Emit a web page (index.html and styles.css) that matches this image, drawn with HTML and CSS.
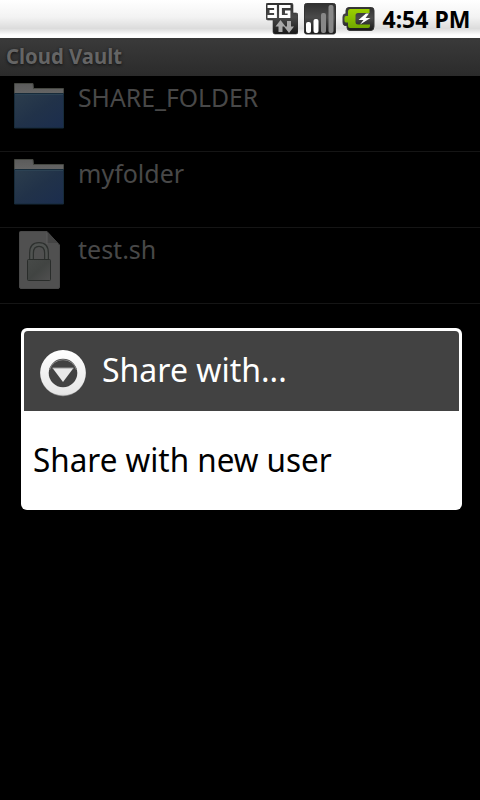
FILE: index.html
```html
<!DOCTYPE html>
<html lang="en">
<head>
<meta charset="utf-8">
<title>Cloud Vault</title>
<link rel="stylesheet" href="styles.css">
</head>
<body>
<svg class="defs" width="0" height="0">
  <defs>
    <linearGradient id="dark" x2="0" y2="1"><stop stop-color="#303030"/><stop offset=".45" stop-color="#4a4a4a"/><stop offset="1" stop-color="#181818"/></linearGradient>
    <linearGradient id="green" x2="0" y2="1"><stop stop-color="#9bd000"/><stop offset="1" stop-color="#70a800"/></linearGradient>
    <linearGradient id="blue" x2="1" y2="1"><stop stop-color="#2c3d4c"/><stop offset=".5" stop-color="#213249"/><stop offset="1" stop-color="#1b2d4e"/></linearGradient>
    <linearGradient id="tab" x2="0" y2="1"><stop stop-color="#5b5b5b"/><stop offset="1" stop-color="#656565"/></linearGradient>
    <linearGradient id="lock" x2="1" y2="1"><stop stop-color="#474a48"/><stop offset=".5" stop-color="#414442"/><stop offset="1" stop-color="#505050"/></linearGradient>
    <linearGradient id="ring" x2="0" y2="1"><stop stop-color="#fff"/><stop offset=".95" stop-color="#e6e6e6"/><stop offset="1" stop-color="#d5d5d5"/></linearGradient>
    <symbol id="folder" viewBox="0 0 50 46">
      <path d="M.5 11V.5h18.500l.5 5h30V11z" fill="url(#tab)" stroke="#454741"/>
      <path d="M.5 10.500h49v34.500H.5z" fill="url(#blue)" stroke="#172b3a"/>
      <path d="M1 11.500h48" stroke="#2c4254"/>
    </symbol>
  </defs>
</svg>
<div class="screen">
  <header class="status">
    <svg class="net" width="32" height="32" viewBox="0 0 32 32">
      <path d="M2 0h23q2 0 2 2v8h3q2 0 2 2v17q0 2-2 2H9q-2 0-2-2V17H2q-2 0-2-2V2q0-2 2-2z" fill="url(#dark)" stroke="#333" stroke-width=".6"/>
      <path d="M1.500 3.500h8v10h-8M3.500 8.500h6M24.500 3.500H14.500v10h8.500V9h-4" fill="none" stroke="#fff" stroke-width="2.800"/>
      <path d="M14.500 17l5 6.500h-3v5.500h-4v-5.500h-3zM23 30l-5-6.500h3V18h4v5.500h3z" fill="#aaa"/>
    </svg>
    <svg class="signal" width="32" height="32" viewBox="0 0 32 32">
      <rect x=".5" y=".5" width="31" height="30.500" rx="2" fill="url(#dark)" stroke="#333"/>
      <rect x="2" y="19" width="5" height="11" rx="2" fill="#fff"/>
      <rect x="9.500" y="16" width="5" height="14" rx="2" fill="#fff"/>
      <rect x="17" y="10" width="5" height="20" rx="2" fill="#888"/>
      <rect x="24.500" y="2" width="5" height="28" rx="2" fill="#888"/>
    </svg>
    <svg class="battery" width="33" height="24" viewBox="0 0 33 24">
      <path d="M7 .5h22.500q2.500 0 2.500 3v16q0 4-3 4H8q-3 0-3-3v-2H3q-2 0-2-3V10q0-3 2-3h1V3.500q0-3 3-3z" fill="url(#dark)" stroke="#383838"/>
      <path d="M8 2h19.500v4H16q-2.500 0-2.500 2.500v6.500q0 2.500 2.500 2.500h12v1.500q0 2-2 2H8q-2 0-2-2v-3.500H4q-1.500 0-1.500-2V11q0-2 1.500-2h2V4.500Q6 2 8 2z" fill="url(#green)"/>
      <path d="M24 6.500l-7.500 6.500h5L18 17.500l10.500-6.500h-5L27 6.500z" fill="#fff"/>
    </svg>
    <span class="clock"><span class="fit">4:54 PM</span></span>
  </header>
  <div class="titlebar"><span class="fit">Cloud Vault</span></div>
  <ul class="files">
    <li><svg class="folder"><use href="#folder"/></svg><span class="name"><span class="fit">SHARE_FOLDER</span></span></li>
    <li><svg class="folder"><use href="#folder"/></svg><span class="name"><span class="fit">myfolder</span></span></li>
    <li><svg class="file" viewBox="0 0 42 58">
      <path d="M1.500.5H28L40.500 14v42q0 1.500-1.500 1.500H2Q.5 57.500.5 56V1.500Q.5.500 1.500.5z" fill="#505050" stroke="#484848"/>
      <path d="M28 .5V13q0 1 1 1h11.500z" fill="#444"/><path d="M28 2v11h11" fill="none" stroke="#5c5c5c"/>
      <path d="M12.500 30v-8q0-8.500 7.500-8.500t7.500 8.500v8" fill="none" stroke="#2d302e" stroke-width="5"/>
      <path d="M12.500 30v-8q0-8.500 7.500-8.500t7.500 8.500v8" fill="none" stroke="#505351" stroke-width="2.500"/>
      <rect x="8.500" y="28.500" width="23" height="21" rx="1" fill="url(#lock)" stroke="#292c2a"/>
    </svg><span class="name"><span class="fit">test.sh</span></span></li>
  </ul>
  <section class="dialog">
    <div class="heading">
      <svg width="46" height="47" viewBox="0 0 46 47">
        <circle cx="23" cy="23.500" r="22.800" fill="#888"/>
        <circle cx="23" cy="22.800" r="22.800" fill="url(#ring)"/>
        <circle cx="23" cy="23" r="14.300" fill="#424242"/>
        <path d="M9.500 20a14 14 0 0 1 27 0" fill="none" stroke="#888" stroke-width="1"/>
        <path d="M12.500 18h21L23 32z" fill="#e9e9e9"/><path d="M12.500 18h21" stroke="#999"/>
      </svg>
      <span class="heading-text"><span class="fit">Share with...</span></span>
    </div>
    <div class="option"><span class="fit">Share with new user</span></div>
  </section>
</div>
</body>
</html>
```
FILE: styles.css
```css
* { box-sizing: border-box; }
body { margin: 0; background: #000; font-family: "Noto Sans", "Open Sans", sans-serif; }
.defs { position: absolute; }
.screen { position: relative; width: 480px; height: 800px; overflow: hidden; background: #000; }
.fit { display: inline-block; white-space: nowrap; transform-origin: 0 50%; }
.status { display: flex; height: 38px; padding: 3px 0 0 266px; background: linear-gradient(#fff 0%, #f3f3f3 45%, #dcdcdc 75%, #fff 92%); }
.signal { margin-left: 6px; }
.battery { margin: 4px 0 0 5.5px; }
.clock { margin-left: 8px; font-size: 23px; font-weight: 700; line-height: 32px; color: #000; }
.titlebar { height: 38px; padding-left: 6px; background: linear-gradient(#3a3a3a, #2b2b2b); font-size: 21px; font-weight: 700; line-height: 36px; color: #656565; text-shadow: 0 1px 3px #111; }
.titlebar .fit { transform: scaleX(.966); }
.files { margin: 0; padding: 0; list-style: none; }
.files li { display: flex; height: 76px; border-bottom: 1px solid #151515; }
.folder { width: 50px; height: 46px; margin: 7px 14px 0; }
.file { width: 42px; height: 58px; margin: 3px 17px 0 19px; }
.name { font-size: 25px; line-height: 42px; color: #484848; }
.files li:first-child .fit { transform: scaleX(.99); }
.dialog { position: absolute; left: 21px; top: 328px; width: 441px; height: 182px; padding: 3px; border-radius: 6px; background: #fff; }
.heading { display: flex; height: 80px; padding: 19px 0 0 16px; border-radius: 4px 4px 0 0; background: #424242; color: #fff; }
.heading-text { margin: -5px 0 0 16px; font-size: 33px; line-height: 49px; }
.heading-text .fit { transform: scaleX(.97); }
.option { padding-left: 9px; font-size: 33px; line-height: 98px; color: #000; }
.option .fit { transform: scaleX(.952); }
```
